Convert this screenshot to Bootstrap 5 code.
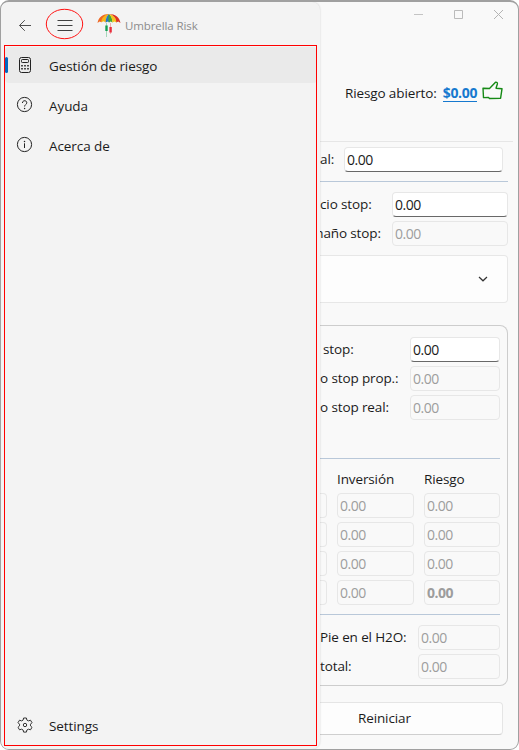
<!DOCTYPE html>
<html lang="es">
<head>
<meta charset="utf-8">
<meta name="viewport" content="width=device-width, initial-scale=1">
<title>Umbrella Risk</title>
<link href="https://cdn.jsdelivr.net/npm/bootstrap@5.3.0/dist/css/bootstrap.min.css" rel="stylesheet">
<style>
body{font-family:"Open Sans","Noto Sans",sans-serif;font-size:13.5px;line-height:20px;letter-spacing:-.12px;color:#1b1b1b;background:#fff;overflow:hidden}
svg{display:block;fill:none;flex:none}
.win{width:519px;height:750px;border:1px solid #a0a0a0;border-top-width:2px;border-radius:9px;background:#f9f9f9;overflow:hidden}
.drawer{flex:0 0 319px;background:#f3f3f3;border-radius:0 8px 8px 0;box-shadow:0 0 2px rgba(0,0,0,.18);z-index:2}
.topbar{height:42px}
.app-title{font-size:11.5px;color:#8c8c8c;letter-spacing:-.1px}
.ellipse-mark{left:44px;top:6px}
.frame-mark{left:3px;top:43px;width:313px;height:701px;border:1px solid #ff0000;pointer-events:none}
.nav-entry{height:36px;margin:0 3px 4px 4px;padding-left:10px;border-radius:4px;letter-spacing:-.08px}
.nav-entry span{padding-top:2px}
.nav-entry.current{background:#eaeaea}
.nav-entry.current::before{content:"";width:3px;height:16px;background:#0067c0;border-radius:2px;margin-left:-10px;margin-right:7px}
.nav-entry svg{width:20px;height:20px;margin-right:14px}
.pane{width:198px;overflow:hidden}
.caption{height:23px;padding:5px 14px 0 93px}
.risk-row{margin-top:54px;height:28px;padding-left:25px}
.risk-link{color:#1679cf;text-decoration:none;border-bottom:1px solid #1679cf;line-height:16px;font-size:14px;letter-spacing:-.3px}
.rule{height:1px;background:#b9c8d9}
.rule-soft{height:1px;background:#e6e6e6}
.fld{height:25px;border:1px solid #e7e7e7;border-radius:4px;padding:2px 2px 0;font-size:14px;line-height:20px;color:#9d9d9d;background:#f9f9f9;letter-spacing:-.5px;flex:none}
.fld.live{background:#fff;color:#1b1b1b;border-bottom-color:#686868}
.line{height:25px;margin-bottom:4px;display:flex;justify-content:space-between;white-space:nowrap;line-height:25px}
.w-a{width:159px}.w-b{width:116px}.w-c{width:90px}.w-d{width:82px}.w-e{width:77px}.w-f{width:76px}
.expander{height:48px;margin-right:10px;border:1px solid #e7e7e7;border-left:0;border-radius:0 4px 4px 0;background:#fdfdfd;padding-right:19px}
.group-box{height:361px;margin-right:10px;border:1px solid #cdcdcd;border-left:0;border-radius:0 8px 8px 0;padding:11px 7px 0 0}
.stub{width:7px;border-left:0;border-radius:0 4px 4px 0;padding:0}
.reset{height:33px;margin-right:15px;border:1px solid #e5e5e5;border-left:0;border-bottom-color:#cfcfcf;border-radius:0 4px 4px 0;background:#fdfdfd;padding-left:38px;line-height:31px}
</style>
</head>
<body>
<div class="win d-flex position-relative">
  <nav class="drawer d-flex flex-column">
    <div class="topbar d-flex align-items-center">
      <svg width="14" height="14" viewBox="0 0 14 14" stroke="#505050" style="margin:4px 0 0 17px"><path d="M13 7.500H1.500M6.800 2.200 1.500 7.500l5.300 5.300"/></svg>
      <svg width="16" height="14" viewBox="0 0 16 14" stroke="#404040" style="margin:4px 0 0 25px"><path d="M.5 2.500h15M.5 7.500h15M.5 12.500h15"/></svg>
      <svg width="24" height="24" viewBox="0 0 24 24" style="margin:4px 0 0 24px">
        <path d="M.5 10C1.500 4 6 1 12 1L7 5 4.500 9.200 2.500 8.400z" fill="#ef6722"/>
        <path d="M12 1C7 2 4.500 5 4.300 9.200L6.500 8.300 8.800 9.500C9 5 10 2.500 12 1z" fill="#f6b51b"/>
        <path d="M12 1C9.500 3 8.700 6 8.700 9.500L11 8.500l1.400 1z" fill="#2578c7"/>
        <path d="M12 1c-.7 3-.8 5.400-.3 8.500l2-.9 1.800.9C15.500 6 14.500 3 12 1z" fill="#46a733"/>
        <path d="M12 1c2.400 2 3.300 5 3.400 8.500l2.100-1.100 1.900 1C19.300 5 16.500 2 12 1z" fill="#f6c51b"/>
        <path d="M12 1c6 0 10.500 3 11.500 9l-2.200-1.400-2 .8C19.200 5 16.500 2 12 1z" fill="#dd3322"/>
        <path d="M9.500 10v14" stroke="#a5d5b9"/><path d="M13.500 10v11" stroke="#efb0b0"/>
        <path d="M8.300 12.500h2.400v5.500H8.300z" fill="#13a052"/><path d="M12.400 14h2.400v5.500h-2.400z" fill="#e92c3c"/>
      </svg>
      <span class="app-title" style="margin:6px 0 0 4px">Umbrella Risk</span>
    </div>
    <div class="d-flex flex-column flex-grow-1" style="padding-top:3px">
      <div class="nav-entry current d-flex align-items-center">
        <svg viewBox="0 0 20 20" stroke="#222"><rect x="4.500" y="2.500" width="11" height="15" rx="2"/><rect x="6.500" y="4.500" width="7" height="3" rx=".8"/><path d="M6.200 10.800h1.600m1.400 0h1.600m1.400 0h1.600M6.200 13.800h1.600m1.400 0h1.600m1.400 0h1.600" stroke-width="1.600"/></svg>
        <span>Gestión de riesgo</span>
      </div>
      <div class="nav-entry d-flex align-items-center">
        <svg viewBox="0 0 20 20" stroke="#222"><circle cx="9.500" cy="9.500" r="7.100"/><path d="M7.400 8c0-3 4.400-3 4.400-.2 0 1.600-2.200 1.800-2.200 3.700"/><circle cx="9.600" cy="13.500" r=".7" fill="#222" stroke="none"/></svg>
        <span>Ayuda</span>
      </div>
      <div class="nav-entry d-flex align-items-center">
        <svg viewBox="0 0 20 20" stroke="#222"><circle cx="9.500" cy="9.500" r="7.100"/><path d="M9.500 8.300V13"/><circle cx="9.500" cy="6.500" r=".75" fill="#222" stroke="none"/></svg>
        <span>Acerca de</span>
      </div>
      <div class="nav-entry d-flex align-items-center mt-auto" style="margin-bottom:6px">
        <svg viewBox="0 0 20 20" stroke="#333" stroke-linejoin="round"><g transform="translate(0 1)"><path d="M8.600 2h2.800l.5 2.100 1.500.8 2.100-.7 1.500 2.500-1.500 1.500v1.700l1.500 1.400-1.500 2.500-2.100-.6-1.500.8-.5 2.100H8.600l-.5-2.100-1.500-.8-2.100.6L3 11.300l1.500-1.400V8.200L3 6.700l1.500-2.500 2.100.7 1.500-.8z"/><circle cx="10" cy="9" r="1.700"/></g></svg>
        <span>Settings</span>
      </div>
    </div>
  </nav>

  <main class="pane">
    <div class="caption d-flex justify-content-between">
      <svg width="11" height="14" viewBox="0 0 11 14" stroke="#c4c4c4"><path d="M1 7.500h9"/></svg>
      <svg width="11" height="14" viewBox="0 0 11 14" stroke="#bbb"><path d="M1.500 3.500h8v8h-8z"/></svg>
      <svg width="11" height="14" viewBox="0 0 11 14" stroke="#b4b4b4"><path d="m1 3 9 9m0-9-9 9"/></svg>
    </div>
    <div class="risk-row d-flex align-items-center">
      <span>Riesgo abierto:</span>
      <span class="risk-link fw-bold" style="margin-left:6px">$0.00</span>
      <svg width="22" height="20" viewBox="0 0 22 20" stroke="#168a16" stroke-width="1.400" stroke-linejoin="round" style="margin:-4px 0 0 5px"><path d="M1 7.200 7.500 7.500 13.500 1.200Q16 1 15.300 3.200L14 7.200 20 7.800 18.600 17.200 7.500 17.500 6.500 16.500 1.500 16.600z"/></svg>
    </div>
    <div class="rule-soft" style="margin:34px 5px 5px 0"></div>
    <div class="line" style="margin-right:15px"><span>al:</span><span class="fld live w-a">0.00</span></div>
    <div class="rule" style="margin:9px 10px 10px 0"></div>
    <div class="line" style="margin-right:10px"><span>cio stop:</span><span class="fld live w-b">0.00</span></div>
    <div class="line" style="margin-right:10px"><span style="margin-left:-9px">maño stop:</span><span class="fld w-b">0.00</span></div>
    <div class="expander d-flex align-items-center justify-content-end" style="margin-top:9px">
      <svg width="10" height="6" viewBox="0 0 10 6" stroke="#333" stroke-width="1.200"><path d="m1 1 4 3.800L9 1"/></svg>
    </div>
    <div class="group-box" style="margin-top:22px">
      <div class="line"><span style="margin-left:3px">stop:</span><span class="fld live w-c">0.00</span></div>
      <div class="line"><span>o stop prop.:</span><span class="fld w-c">0.00</span></div>
      <div class="line"><span>o stop real:</span><span class="fld w-c">0.00</span></div>
      <div class="rule" style="margin-top:38px"></div>
      <div class="d-flex" style="height:34px;padding:10px 0 0 17px"><span style="width:87px">Inversión</span><span>Riesgo</span></div>
      <div class="line"><span class="fld stub"></span><span class="fld w-e">0.00</span><span class="fld w-f">0.00</span></div>
      <div class="line"><span class="fld stub"></span><span class="fld w-e">0.00</span><span class="fld w-f">0.00</span></div>
      <div class="line"><span class="fld stub"></span><span class="fld w-e">0.00</span><span class="fld w-f">0.00</span></div>
      <div class="line"><span class="fld stub"></span><span class="fld w-e">0.00</span><span class="fld w-f fw-bold">0.00</span></div>
      <div class="rule" style="margin:9px 0 10px"></div>
      <div class="line"><span>Pie en el H2O:</span><span class="fld w-d">0.00</span></div>
      <div class="line"><span>total:</span><span class="fld w-d">0.00</span></div>
    </div>
    <div class="reset" style="margin-top:16px">Reiniciar</div>
  </main>

  <svg class="ellipse-mark position-absolute z-3" width="39" height="32" viewBox="0 0 39 32" stroke="#f11"><ellipse cx="19.500" cy="16" rx="18.200" ry="14.700"/></svg>
  <div class="frame-mark position-absolute z-3"></div>
</div>
</body>
</html>
